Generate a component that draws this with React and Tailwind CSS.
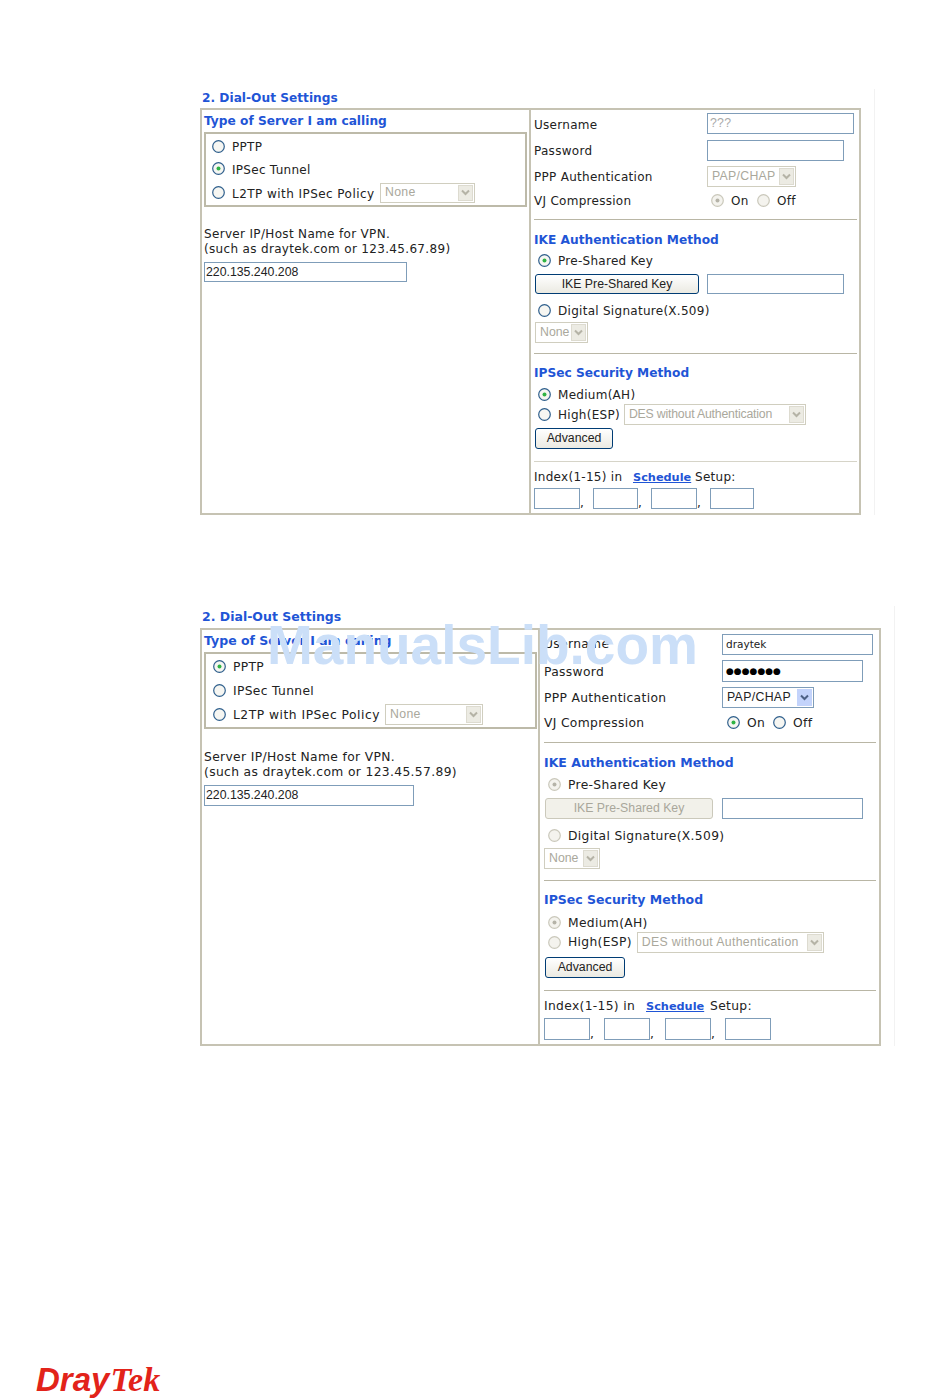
import React from "react";

const label = "font-['DejaVu_Sans',sans-serif] text-[12px] tracking-[0.28px] leading-none text-[#222] whitespace-nowrap";
const label2 = "font-['DejaVu_Sans',sans-serif] text-[12.3px] tracking-[0.33px] leading-none text-[#222] whitespace-nowrap";
const note = "font-['DejaVu_Sans',sans-serif] text-[12px] tracking-[0.33px] leading-[15px] text-[#222] whitespace-nowrap";
const note2 = "font-['DejaVu_Sans',sans-serif] text-[12.3px] tracking-[0.35px] leading-[15px] text-[#222] whitespace-nowrap";
const heading = "font-['DejaVu_Sans',sans-serif] font-bold text-[12.2px] leading-none text-[#1f55d6] whitespace-nowrap";
const heading2 = "font-['DejaVu_Sans',sans-serif] font-bold text-[12.5px] leading-none text-[#1f55d6] whitespace-nowrap";
const arial = "font-['Liberation_Sans',sans-serif] text-[12.3px] leading-none whitespace-nowrap";

// labels sit a pixel lower than the controls next to them
const T = ({ className = "", children }) => <span className={`pt-[2px] ${className}`}>{children}</span>;

// XP style radio, grey when disabled
const Radio = ({ checked, disabled, className = "" }) => (
  <svg width="13" height="13" viewBox="0 0 13 13" className={`shrink-0 ${className}`}>
    <circle
      cx="6.5"
      cy="6.5"
      r="5.8"
      fill={disabled ? "#f4f3ee" : "#f6f6f2"}
      stroke={disabled ? "#cac8bb" : "#2f5f8c"}
      strokeWidth="1.2"
    />
    {checked && <circle cx="6.5" cy="6.5" r="2" fill={disabled ? "#b5b3a8" : "#2fb344"} />}
  </svg>
);

const Box = ({ className = "", children }) => (
  <div className={`border border-[#7f9db9] bg-white flex items-center px-[2px] ${className}`}>
    {children}
  </div>
);

const Chevron = ({ color }) => (
  <svg width="9" height="7" viewBox="0 0 9 7">
    <path d="M1 1.5 L4.5 5 L8 1.5" fill="none" stroke={color} strokeWidth="2" />
  </svg>
);

const DisabledSelect = ({ text, className = "", textClassName = "" }) => (
  <div className={`border border-[#d0cebf] bg-white flex items-center justify-between p-px ${className}`}>
    <span className={`${arial} pl-[3px] text-[#aaa89c] ${textClassName}`}>{text}</span>
    <span className="w-[15px] h-full bg-[#ecebe3] border border-[#dddbd0] flex items-center justify-center">
      <Chevron color="#b5b3a6" />
    </span>
  </div>
);

const XpButton = ({ text, disabled, className = "" }) => (
  <div
    className={`rounded-[3px] border flex items-center justify-center ${arial} ${
      disabled
        ? "border-[#cbc9bb] bg-[#f2f1ea] text-[#a9a79b]"
        : "border-[#003c74] bg-gradient-to-b from-white to-[#ebeae2] text-[#222]"
    } ${className}`}
  >
    {text}
  </div>
);

const Divider = ({ className = "" }) => <div className={`h-px bg-[#b9b6a5] ${className}`} />;

const ScheduleLink = () => (
  <span className="font-bold text-[11.3px] tracking-normal text-[#1f55d6] underline">Schedule</span>
);

const PanelOne = () => (
  <section className="ml-[200px] w-[675px] border-r border-[#f2f2f2]">
    <h2 className={`${heading} h-[17px] mb-[2px] pt-[2px] flex items-center pl-[2px]`}>2. Dial-Out Settings</h2>
    <div className="w-[661px] h-[407px] border-2 border-[#c6c3b3] flex">
      <div className="w-[329px] border-r-2 border-[#c6c3b3] pl-[2px]">
        <div className={`${heading} h-[20px] mb-[2px] pt-[2px] flex items-center`}>Type of Server I am calling</div>
        <div className="w-[323px] h-[75px] border-2 border-[#bdbaa9] pl-[6px] flex flex-col">
          <div className={`${label} h-[22px] mt-px flex items-center gap-[7px]`}>
            <Radio />
            <T>PPTP</T>
          </div>
          <div className={`${label} h-[23px] flex items-center gap-[7px]`}>
            <Radio checked />
            <T>IPSec Tunnel</T>
          </div>
          <div className={`${label} h-[25px] flex items-center gap-[7px]`}>
            <Radio />
            <T className="w-[141px] tracking-[0.45px]">L2TP with IPSec Policy</T>
            <DisabledSelect text="None" className="w-[95px] h-[20px]" />
          </div>
        </div>
        <div className={`${note} mt-[20px]`}>
          Server IP/Host Name for VPN.
          <br />
          (such as draytek.com or 123.45.67.89)
        </div>
        <Box className={`${arial} w-[203px] h-[20px] mt-[5px] text-[#222] px-px`}>220.135.240.208</Box>
      </div>
      <div className="w-[328px] pl-[3px]">
        <div className={`${label} h-[27px] flex items-center`}>
          <T className="w-[173px]">Username</T>
          <Box className={`${arial} w-[147px] h-[21px] text-[#aaa]`}>???</Box>
        </div>
        <div className={`${label} h-[26px] flex items-center`}>
          <T className="w-[173px]">Password</T>
          <Box className="w-[137px] h-[21px]" />
        </div>
        <div className={`${label} h-[26px] flex items-center`}>
          <T className="w-[173px]">PPP Authentication</T>
          <DisabledSelect text="PAP/CHAP" className="w-[89px] h-[21px]" />
        </div>
        <div className={`${label} h-[23px] flex items-center`}>
          <span className="w-[177px]">VJ Compression</span>
          <Radio checked disabled />
          <span className="ml-[7px] w-[26px]">On</span>
          <Radio disabled />
          <span className="ml-[7px]">Off</span>
        </div>
        <Divider className="mt-[7px] w-[323px]" />
        <div className={`${heading} mt-[9px] h-5 pt-[2px] flex items-center`}>IKE Authentication Method</div>
        <div className={`${label} h-[22px] flex items-center gap-[7px] pl-1`}>
          <Radio checked />
          <T>Pre-Shared Key</T>
        </div>
        <div className="mt-[3px] h-5 flex">
          <XpButton text="IKE Pre-Shared Key" className="ml-px w-[164px]" />
          <Box className="ml-2 w-[137px]" />
        </div>
        <div className={`${label} mt-[5px] h-[22px] flex items-center gap-[7px] pl-1`}>
          <Radio />
          <T>Digital Signature(X.509)</T>
        </div>
        <DisabledSelect text="None" className="mt-px ml-px w-[53px] h-[21px]" />
        <Divider className="mt-[10px] w-[323px]" />
        <div className={`${heading} mt-2 h-5 pt-[2px] flex items-center`}>IPSec Security Method</div>
        <div className={`${label} mt-[2px] h-5 flex items-center gap-[7px] pl-1`}>
          <Radio checked />
          <T>Medium(AH)</T>
        </div>
        <div className={`${label} h-[21px] flex items-center gap-[7px] pl-1`}>
          <Radio />
          High(ESP)
          <DisabledSelect
            text="DES without Authentication"
            textClassName="tracking-[-0.2px]"
            className="-ml-[3px] w-[182px] h-[21px]"
          />
        </div>
        <XpButton text="Advanced" className="mt-[3px] ml-px w-[78px] h-[21px]" />
        <Divider className="mt-3 w-[323px] bg-[#d6d4c8]" />
        <div className={`${label} mt-[5px] h-[18px] flex items-center`}>
          <T className="w-[99px]">Index(1-15) in</T>
          <T className="w-[62px]">
            <ScheduleLink />
          </T>
          <T>Setup:</T>
        </div>
        <div className={`${label} mt-[3px] h-[21px] flex items-end`}>
          <Box className="w-[46px] h-[21px]" />
          <span className="w-[13px]">,</span>
          <Box className="w-[45px] h-[21px]" />
          <span className="w-[13px]">,</span>
          <Box className="w-[46px] h-[21px]" />
          <span className="w-[13px]">,</span>
          <Box className="w-[44px] h-[21px]" />
        </div>
      </div>
    </div>
  </section>
);

const PanelTwo = () => (
  <section className="mt-[91px] ml-[200px] w-[695px] border-r border-[#f2f2f2]">
    <h2 className={`${heading2} h-[22px] flex items-center pl-[2px]`}>2. Dial-Out Settings</h2>
    <div className="w-[681px] h-[418px] border-2 border-[#c6c3b3] flex">
      <div className="w-[339px] border-r-2 border-[#c6c3b3] pl-[2px]">
        <div className={`${heading2} h-[22px] flex items-center`}>Type of Server I am calling</div>
        <div className="w-[333px] h-[77px] border-2 border-[#bdbaa9] pl-[7px] flex flex-col">
          <div className={`${label2} h-[23px] mt-px flex items-center gap-[7px]`}>
            <Radio checked />
            <T>PPTP</T>
          </div>
          <div className={`${label2} h-[24px] flex items-center gap-[7px]`}>
            <Radio />
            <T>IPSec Tunnel</T>
          </div>
          <div className={`${label2} h-[25px] flex items-center gap-[7px]`}>
            <Radio />
            <T className="w-[145px] tracking-[0.5px]">L2TP with IPSec Policy</T>
            <DisabledSelect text="None" className="w-[98px] h-[21px]" />
          </div>
        </div>
        <div className={`${note2} mt-[21px]`}>
          Server IP/Host Name for VPN.
          <br />
          (such as draytek.com or 123.45.57.89)
        </div>
        <Box className={`${arial} w-[210px] h-[21px] mt-[5px] text-[#222] px-px`}>220.135.240.208</Box>
      </div>
      <div className="w-[340px] pl-1">
        <div className={`${label2} h-[28px] flex items-center`}>
          <span className="w-[178px]">Username</span>
          <Box className="font-['DejaVu_Sans',sans-serif] text-[10.5px] tracking-normal w-[151px] h-[21px] px-[3px]">draytek</Box>
        </div>
        <div className={`${label2} h-[26px] flex items-center`}>
          <T className="w-[178px]">Password</T>
          <Box className="w-[141px] h-[22px] text-[9px] tracking-normal text-black px-[3px]">●●●●●●●</Box>
        </div>
        <div className={`${label2} h-[26px] flex items-center`}>
          <T className="w-[178px]">PPP Authentication</T>
          <div className={`${arial} w-[92px] h-[21px] border border-[#7f9db9] flex items-center justify-between p-px pl-[4px]`}>
            PAP/CHAP
            <span className="w-[15px] h-full bg-[#c3d3fb] flex items-center justify-center">
              <Chevron color="#4d6185" />
            </span>
          </div>
        </div>
        <div className={`${label2} h-[24px] flex items-center`}>
          <T className="w-[183px]">VJ Compression</T>
          <Radio checked />
          <T className="ml-[7px] w-[26px]">On</T>
          <Radio />
          <T className="ml-[7px]">Off</T>
        </div>
        <Divider className="mt-2 w-[332px]" />
        <div className={`${heading2} mt-[9px] h-5 pt-[2px] flex items-center`}>IKE Authentication Method</div>
        <div className={`${label2} mt-px h-[22px] flex items-center gap-[7px] pl-1`}>
          <Radio checked disabled />
          <T>Pre-Shared Key</T>
        </div>
        <div className="mt-[3px] h-[21px] flex">
          <XpButton text="IKE Pre-Shared Key" disabled className="ml-px w-[168px]" />
          <Box className="ml-[9px] w-[141px]" />
        </div>
        <div className={`${label2} mt-[5px] h-[22px] flex items-center gap-[7px] pl-1`}>
          <Radio disabled />
          <T>Digital Signature(X.509)</T>
        </div>
        <DisabledSelect text="None" className="mt-[2px] w-[56px] h-[21px]" />
        <Divider className="mt-[11px] w-[332px]" />
        <div className={`${heading2} mt-2 h-5 pt-[2px] flex items-center`}>IPSec Security Method</div>
        <div className={`${label2} mt-[3px] h-5 flex items-center gap-[7px] pl-1`}>
          <Radio checked disabled />
          <T>Medium(AH)</T>
        </div>
        <div className={`${label2} h-5 flex items-center gap-[7px] pl-1`}>
          <Radio disabled />
          High(ESP)
          <DisabledSelect text="DES without Authentication" className="-ml-[2px] w-[187px] h-[21px]" />
        </div>
        <XpButton text="Advanced" className="mt-[5px] ml-px w-[80px] h-[21px]" />
        <Divider className="mt-3 w-[332px]" />
        <div className={`${label2} mt-[6px] h-[18px] flex items-center`}>
          <span className="w-[102px]">Index(1-15) in</span>
          <span className="w-[64px]">
            <ScheduleLink />
          </span>
          Setup:
        </div>
        <div className={`${label2} mt-[3px] h-[22px] flex items-end`}>
          <Box className="w-[46px] h-[22px]" />
          <span className="w-[14px]">,</span>
          <Box className="w-[46px] h-[22px]" />
          <span className="w-[15px]">,</span>
          <Box className="w-[46px] h-[22px]" />
          <span className="w-[14px]">,</span>
          <Box className="w-[46px] h-[22px]" />
        </div>
      </div>
    </div>
  </section>
);

const App = () => {
  return (
    <div className="relative w-[950px] h-[1398px] bg-white overflow-hidden pt-[89px]">
      <PanelOne />
      <PanelTwo />
      {/* watermark sits on top of the second panel */}
      <div className="absolute left-[267px] top-[614px] font-['Liberation_Sans',sans-serif] font-bold text-[55px] leading-[62px] text-[#cbdff8] whitespace-nowrap">
        ManualsLib.com
      </div>
      <div className="ml-[36px] mt-[317px] h-[36px] flex items-baseline whitespace-nowrap text-[#e2231a] italic leading-none">
        <span className="font-['Liberation_Sans',sans-serif] font-bold text-[33px]">Dray</span>
        <span className="ml-px font-['Liberation_Serif',serif] font-bold text-[34px]">Tek</span>
      </div>
    </div>
  );
};

export default App;
